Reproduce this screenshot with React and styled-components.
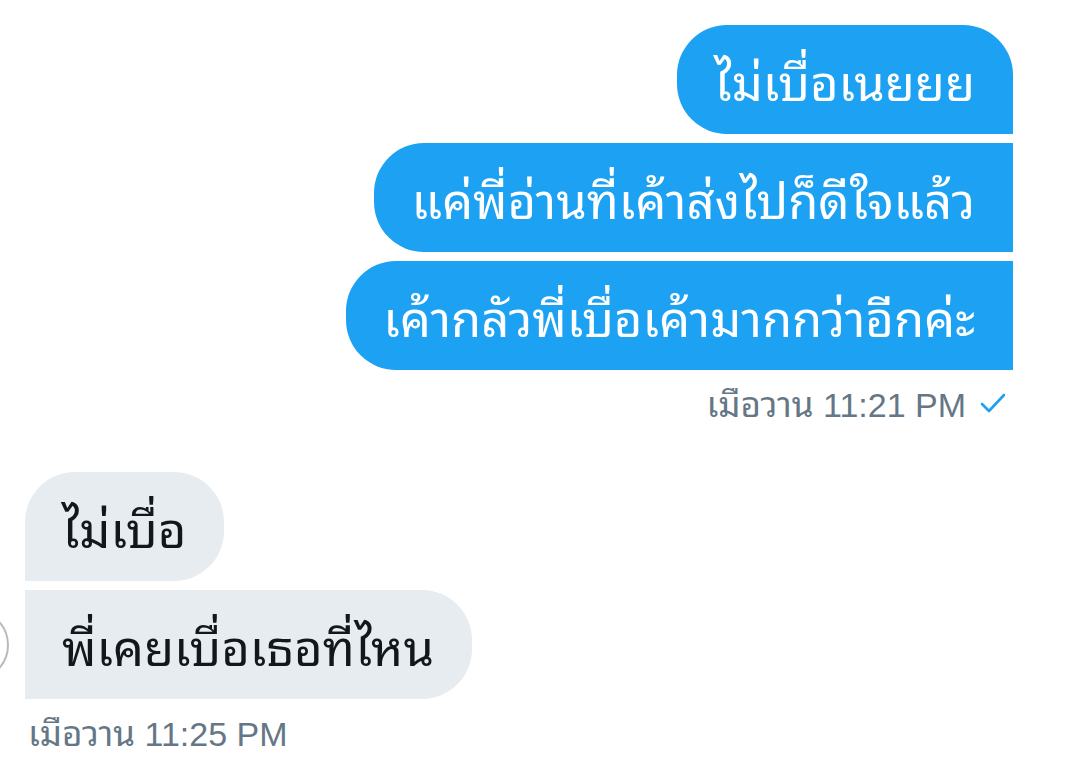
import styled, { createGlobalStyle } from 'styled-components';

const GlobalStyle = createGlobalStyle`
  html, body {
    margin: 0;
    padding: 0;
    background: #fff;
  }
  body {
    font-family: "Noto Sans Thai Looped", "Noto Sans Thai", "Loma", "Garuda", "Noto Sans", "Liberation Sans", sans-serif;
  }
`;

const Page = styled.div`
  width: 1072px;
  height: 770px;
  overflow: hidden;
  display: flex;
  flex-direction: column;
  padding-top: 25px;
  box-sizing: border-box;
`;

const Group = styled.div`
  display: flex;
  flex-direction: column;
  align-items: ${p => (p.$sent ? 'flex-end' : 'flex-start')};
  padding: ${p => (p.$sent ? '0 59px 0 0' : '0 0 0 25px')};
  gap: 9px;
`;

const Row = styled.div`
  position: relative;
  display: flex;
  align-items: center;
`;

// avatar of the other person, almost fully cut off by the left edge
const Avatar = styled.div`
  position: absolute;
  left: -88px;
  top: 50%;
  width: 72px;
  height: 72px;
  margin-top: -36px;
  border-radius: 50%;
  border: 2px solid rgba(20, 23, 26, 0.3);
  box-sizing: border-box;
`;

const Bubble = styled.div`
  font-size: 49px;
  line-height: 53px;
  padding: 28px 38px 28px 37px;
  white-space: nowrap;
  background: ${p => (p.$sent ? '#1da1f2' : '#e6ecf0')};
  color: ${p => (p.$sent ? '#fff' : '#14171a')};
  border-radius: ${p => p.$radius};
`;

const Stamp = styled.div`
  display: flex;
  align-items: center;
  gap: 14px;
  font-family: "Liberation Sans", "Noto Sans", sans-serif;
  font-size: 34px;
  line-height: 40px;
  color: #657786;
  margin-top: 11px;
  padding: ${p => (p.$sent ? '0 66px 0 0' : '0 0 0 28px')};
  align-self: ${p => (p.$sent ? 'flex-end' : 'flex-start')};
`;

const ThaiWord = styled.span`
  font-family: "Noto Sans Thai Looped", "Noto Sans Thai", "Loma", "Garuda", "Noto Sans", sans-serif;
  font-size: 35px;
`;

const Spacer = styled.div`
  height: 47px;
`;

const sent = [
  'ไม่เบื่อเนยยย',
  'แค่พี่อ่านที่เค้าส่งไปก็ดีใจแล้ว',
  'เค้ากลัวพี่เบื่อเค้ามากกว่าอีกค่ะ',
];

const received = ['ไม่เบื่อ', 'พี่เคยเบื่อเธอที่ไหน'];

const R = '50px';

const sentRadius = i => (i === 0 ? `${R} ${R} 0 ${R}` : `${R} 0 0 ${R}`);
const recvRadius = i => (i === 0 ? `${R} ${R} ${R} 0` : `0 ${R} ${R} 0`);

const Check = () => (
  <svg width="26" height="22" viewBox="0 0 26 22" fill="none">
    <path d="M2 12 L9 19 L24 3" stroke="#1da1f2" strokeWidth="2.6" strokeLinecap="round" strokeLinejoin="round" />
  </svg>
);

export default function App() {
  return (
    <Page>
      <GlobalStyle />
      <Group $sent>
        {sent.map((t, i) => (
          <Bubble key={i} $sent $radius={sentRadius(i)}>{t}</Bubble>
        ))}
      </Group>
      <Stamp $sent>
        <span><ThaiWord>เมือวาน</ThaiWord> 11:21 PM</span>
        <Check />
      </Stamp>
      <Spacer />
      <Group>
        {received.map((t, i) => (
          <Row key={i}>
            {i === received.length - 1 && <Avatar />}
            <Bubble $radius={recvRadius(i)}>{t}</Bubble>
          </Row>
        ))}
      </Group>
      <Stamp>
        <span><ThaiWord>เมือวาน</ThaiWord> 11:25 PM</span>
      </Stamp>
    </Page>
  );
}
